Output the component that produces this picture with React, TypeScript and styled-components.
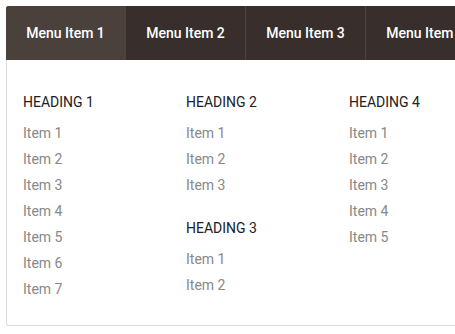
import React from "react";
import styled, { createGlobalStyle } from "styled-components";

const Global = createGlobalStyle`
  html, body { margin: 0; padding: 0; background: #fff; overflow: hidden; }
  body { font-family: Roboto, "Liberation Sans", sans-serif; }
`;

const Page = styled.div`
  padding: 6px 0 0 6px;
  width: 520px;
`;

const Nav = styled.nav`
  display: flex;
  height: 54px;
  background: #382f2c;
  border-radius: 3px 0 0 0;
  overflow: hidden;
`;

const NavItem = styled.div<{ $active?: boolean }>`
  display: flex;
  align-items: center;
  justify-content: center;
  width: 119px;
  flex: none;
  background: ${(p) => (p.$active ? "#4a413d" : "#382f2c")};
  border-right: 1px solid #4d4441;
  color: #fff;
  font-size: 14px;
  font-weight: 500;
  white-space: nowrap;
`;

const Panel = styled.div`
  display: grid;
  grid-template-columns: repeat(3, 163px);
  align-items: start;
  padding: 29px 0 23px 16px;
  border: 1px solid #dcdcdc;
  border-top: none;
  border-radius: 0 0 0 3px;
`;

const Column = styled.div`
  display: flex;
  flex-direction: column;
`;

const Heading = styled.div<{ $spaced?: boolean }>`
  font-size: 14px;
  line-height: 26px;
  color: #222;
  margin-top: ${(p) => (p.$spaced ? "17px" : "0")};
  margin-bottom: 5px;
`;

const Item = styled.div`
  font-size: 14px;
  line-height: 26px;
  color: #888;
`;

const Group = ({ title, count, spaced }: { title: string; count: number; spaced?: boolean }) => (
  <>
    <Heading $spaced={spaced}>{title}</Heading>
    {Array.from({ length: count }, (_, i) => (
      <Item key={i}>Item {i + 1}</Item>
    ))}
  </>
);

export default function App() {
  return (
    <Page>
      <Global />
      <Nav>
        <NavItem $active>Menu Item 1</NavItem>
        <NavItem>Menu Item 2</NavItem>
        <NavItem>Menu Item 3</NavItem>
        <NavItem>Menu Item 4</NavItem>
      </Nav>
      <Panel>
        <Column>
          <Group title="HEADING 1" count={7} />
        </Column>
        <Column>
          <Group title="HEADING 2" count={3} />
          <Group title="HEADING 3" count={2} spaced />
        </Column>
        <Column>
          <Group title="HEADING 4" count={5} />
        </Column>
      </Panel>
    </Page>
  );
}
